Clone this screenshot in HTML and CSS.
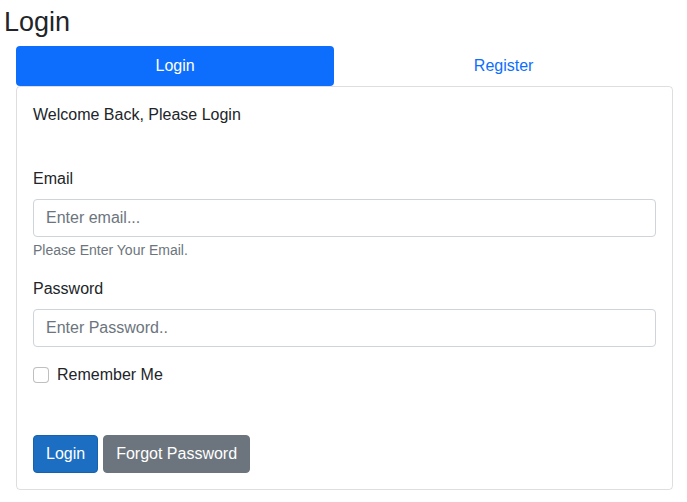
FILE: index.html
```html
<!DOCTYPE html>
<html lang="en">
<head>
<meta charset="utf-8">
<title>Login</title>
<link rel="stylesheet" href="styles.css">
</head>
<body>
<div class="page">
  <h2 class="title">Login</h2>
  <div class="tabs-wrap">
    <nav class="tabs">
      <a class="tab active" href="#">Login</a>
      <a class="tab" href="#">Register</a>
    </nav>
    <div class="card">
      <div class="card-body">
        <p class="welcome">Welcome Back, Please Login</p>
        <form class="form">
          <div class="group">
            <label class="label" for="email">Email</label>
            <input class="input" id="email" type="email" placeholder="Enter email...">
            <div class="help">Please Enter Your Email.</div>
          </div>
          <div class="group">
            <label class="label" for="pw">Password</label>
            <input class="input" id="pw" type="password" placeholder="Enter Password..">
          </div>
          <div class="check">
            <input class="check-input" id="rem" type="checkbox">
            <label class="check-label" for="rem">Remember Me</label>
          </div>
          <div class="actions">
            <button class="btn btn-primary" type="button">Login</button>
            <button class="btn btn-secondary" type="button">Forgot Password</button>
          </div>
        </form>
      </div>
    </div>
  </div>
</div>
</body>
</html>
```

FILE: styles.css
```css
* { box-sizing: border-box; }
html, body { margin: 0; padding: 0; background: #fff; }
body {
  font-family: "Liberation Sans", Arial, sans-serif;
  font-size: 16px;
  line-height: 1.5;
  color: #212529;
}
.page { padding: 6px 14px 0 0; }
.title {
  margin: 0 0 8px 4px;
  font-size: 27px;
  font-weight: 400;
  line-height: 1.2;
}
.tabs-wrap { margin-left: 16px; }
.tabs { display: flex; }
.tab {
  flex: 1 1 auto;
  text-align: center;
  padding: 8px 16px;
  color: #0d6efd;
  text-decoration: none;
  border-radius: 4px;
}
.tab.active { background: #0d6efd; color: #fff; }
.card {
  border: 1px solid rgba(0, 0, 0, 0.13);
  border-radius: 4px;
}
.card-body { padding: 16px 16px 16px; }
.welcome { margin: 0 0 40px; }
.group { margin-bottom: 16px; }
.label { display: block; margin-bottom: 8px; }
.input {
  display: block;
  width: 100%;
  height: 38px;
  padding: 6px 12px;
  font: inherit;
  color: #212529;
  border: 1px solid #ced4da;
  border-radius: 4px;
  background: #fff;
}
.input::placeholder { color: #6c757d; opacity: 1; }
.help {
  margin-top: 3px;
  font-size: 14px;
  color: #6c757d;
}
.check {
  display: flex;
  align-items: flex-start;
  gap: 8px;
  min-height: 24px;
  margin-bottom: 2px;
}
.check-input {
  appearance: none;
  -webkit-appearance: none;
  width: 16px;
  height: 16px;
  margin: 4px 0 0;
  border: 1px solid rgba(0, 0, 0, 0.25);
  border-radius: 4px;
  background: #fff;
  flex: none;
}
.actions { margin-top: 48px; display: flex; gap: 5px; }
.btn {
  font: inherit;
  line-height: 24px;
  padding: 6px 12px;
  border: 1px solid transparent;
  border-radius: 4px;
  color: #fff;
}
.btn-primary { background: #1b6ec2; border-color: #1861ac; }
.btn-secondary { background: #6c757d; border-color: #6c757d; }
```
